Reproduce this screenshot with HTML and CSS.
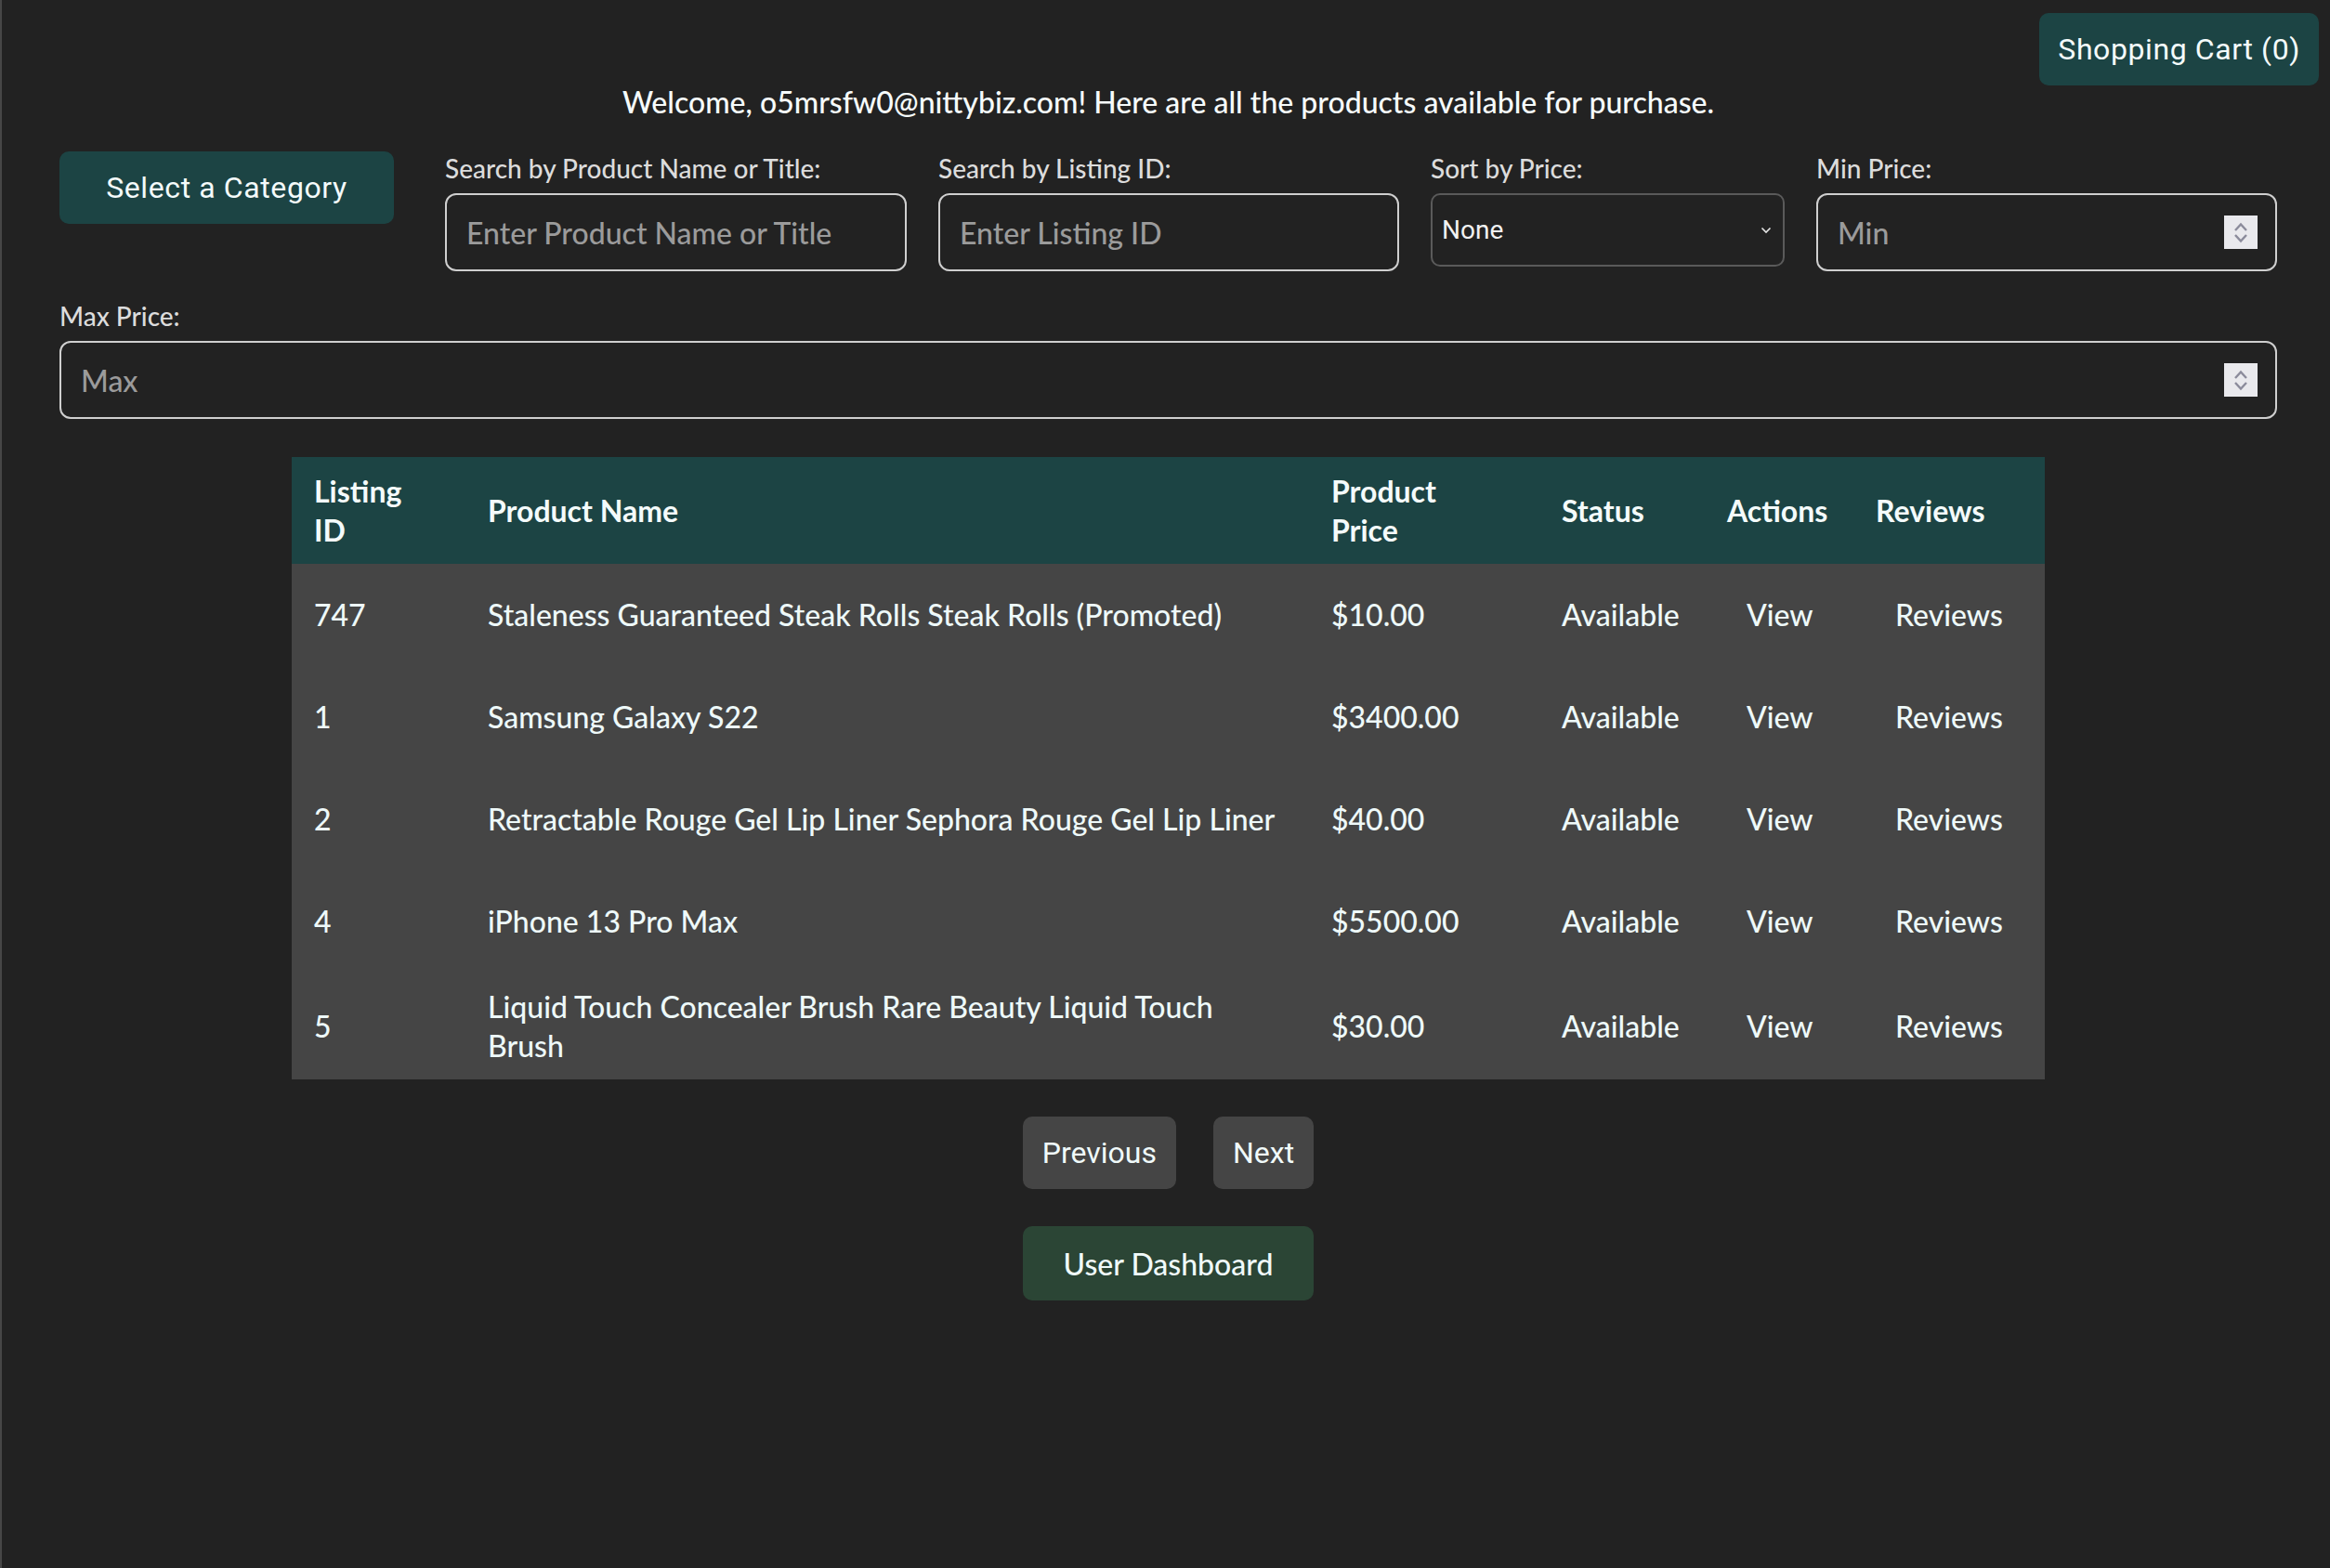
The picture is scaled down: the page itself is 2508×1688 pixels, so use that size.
FILE: index.html
```html
<!DOCTYPE html>
<html lang="en">
<head>
<meta charset="utf-8">
<title>Products</title>
<link rel="stylesheet" href="styles.css">
</head>
<body>
<button class="cart-btn" type="button">Shopping Cart (0)</button>
<main class="page">
  <p class="welcome">Welcome, o5mrsfw0@nittybiz.com! Here are all the products available for purchase.</p>

  <section class="filters">
    <div class="filter-row">
      <button class="category-btn" type="button">Select a Category</button>
      <label class="field field-name">
        <span class="field-label">Search by Product Name or Title:</span>
        <span class="box"><input type="text" placeholder="Enter Product Name or Title"></span>
      </label>
      <label class="field field-id">
        <span class="field-label">Search by Listing ID:</span>
        <span class="box"><input type="text" placeholder="Enter Listing ID"></span>
      </label>
      <label class="field field-sort">
        <span class="field-label">Sort by Price:</span>
        <span class="select-box">
          <select><option>None</option></select>
          <svg class="chev" width="12" height="8" viewBox="0 0 12 8"><path d="M1.5 1.5 L6 6 L10.5 1.5" fill="none" stroke="#e6e6e6" stroke-width="1.6"/></svg>
        </span>
      </label>
      <label class="field field-min">
        <span class="field-label">Min Price:</span>
        <span class="box">
          <input type="text" placeholder="Min">
          <span class="spinner">
            <svg width="16" height="28" viewBox="0 0 16 28"><path d="M2 12 L8 5.5 L14 12" fill="none" stroke="#8b8b9b" stroke-width="2.4"/><path d="M2 17 L8 23.5 L14 17" fill="none" stroke="#8b8b9b" stroke-width="2.4"/></svg>
          </span>
        </span>
      </label>
    </div>
    <label class="field field-max">
      <span class="field-label">Max Price:</span>
      <span class="box">
        <input type="text" placeholder="Max">
        <span class="spinner">
          <svg width="16" height="28" viewBox="0 0 16 28"><path d="M2 12 L8 5.5 L14 12" fill="none" stroke="#8b8b9b" stroke-width="2.4"/><path d="M2 17 L8 23.5 L14 17" fill="none" stroke="#8b8b9b" stroke-width="2.4"/></svg>
        </span>
      </span>
    </label>
  </section>

  <table class="products">
    <colgroup>
      <col class="c-id"><col class="c-name"><col class="c-price"><col class="c-status"><col class="c-actions"><col class="c-reviews">
    </colgroup>
    <thead>
      <tr>
        <th>Listing<br>ID</th>
        <th>Product Name</th>
        <th>Product<br>Price</th>
        <th>Status</th>
        <th>Actions</th>
        <th>Reviews</th>
      </tr>
    </thead>
    <tbody>
      <tr class="row">
        <td>747</td>
        <td>Staleness Guaranteed Steak Rolls Steak Rolls (Promoted)</td>
        <td>$10.00</td>
        <td>Available</td>
        <td><button class="link-btn" type="button">View</button></td>
        <td><button class="link-btn" type="button">Reviews</button></td>
      </tr>
      <tr class="row">
        <td>1</td>
        <td>Samsung Galaxy S22</td>
        <td>$3400.00</td>
        <td>Available</td>
        <td><button class="link-btn" type="button">View</button></td>
        <td><button class="link-btn" type="button">Reviews</button></td>
      </tr>
      <tr class="row">
        <td>2</td>
        <td>Retractable Rouge Gel Lip Liner Sephora Rouge Gel Lip Liner</td>
        <td>$40.00</td>
        <td>Available</td>
        <td><button class="link-btn" type="button">View</button></td>
        <td><button class="link-btn" type="button">Reviews</button></td>
      </tr>
      <tr class="row">
        <td>4</td>
        <td>iPhone 13 Pro Max</td>
        <td>$5500.00</td>
        <td>Available</td>
        <td><button class="link-btn" type="button">View</button></td>
        <td><button class="link-btn" type="button">Reviews</button></td>
      </tr>
      <tr class="row">
        <td>5</td>
        <td>Liquid Touch Concealer Brush Rare Beauty Liquid Touch Brush</td>
        <td>$30.00</td>
        <td>Available</td>
        <td><button class="link-btn" type="button">View</button></td>
        <td><button class="link-btn" type="button">Reviews</button></td>
      </tr>
    </tbody>
  </table>

  <div class="nav-actions">
    <div class="pager">
      <button class="pager-btn" type="button">Previous</button>
      <button class="pager-btn" type="button">Next</button>
    </div>
    <button class="dashboard-btn" type="button">User Dashboard</button>
  </div>
</main>
</body>
</html>
```

FILE: styles.css
```css
html {
  background: #222222;
}

body {
  margin: 0;
  min-height: 1688px;
  box-sizing: border-box;
  background: #222222;
  border-left: 2px solid #474747;
  color: #eef9f9;
  font-family: Lato, "Noto Sans", sans-serif;
  font-weight: 500;
}

.page {
  padding: 89px 57px 60px 62px;
}

.cart-btn {
  position: absolute;
  top: 14px;
  right: 12px;
  height: 78px;
  padding: 0 20px;
  border: none;
  border-radius: 10px;
  background: #1c4444;
  color: #f4fbfb;
  font-family: Roboto, "Liberation Sans", sans-serif;
  font-size: 32px;
  letter-spacing: 0.6px;
}

.welcome {
  margin: 0;
  text-align: center;
  font-size: 32px;
  line-height: 41px;
  color: #f6fbfb;
}

.filters {
  margin-top: 33px;
}

.filter-row {
  display: flex;
  align-items: flex-start;
  gap: 34px;
}

.category-btn {
  width: 360px;
  height: 78px;
  margin-right: 21px;
  flex-shrink: 0;
  border: none;
  border-radius: 10px;
  background: #1c4444;
  color: #f4fbfb;
  font-family: Roboto, "Liberation Sans", sans-serif;
  font-size: 32px;
  letter-spacing: 0.6px;
}

.field {
  display: flex;
  flex-direction: column;
}

.field-name { width: 497px; }
.field-id { width: 496px; }
.field-sort { width: 381px; }
.field-min { width: 496px; }

.field-label {
  font-size: 28px;
  line-height: 34px;
  color: #dcdcdc;
  margin-bottom: 10px;
  padding-top: 1px;
}

.box {
  display: flex;
  align-items: center;
  height: 84px;
  box-sizing: border-box;
  border: 2px solid #cfcfcf;
  border-radius: 12px;
  padding: 0 19px 0 21px;
}

.box input {
  flex: 1;
  min-width: 0;
  padding: 0;
  border: none;
  outline: none;
  background: transparent;
  color: #eeeeee;
  font-family: Lato, "Noto Sans", sans-serif;
  font-weight: 500;
  font-size: 32px;
}

.box input::placeholder {
  color: #9b9b9b;
}

.spinner {
  width: 36px;
  height: 36px;
  display: flex;
  align-items: center;
  justify-content: center;
  background: #e9e9ed;
}

.select-box {
  display: flex;
  align-items: center;
  height: 79px;
  box-sizing: border-box;
  border: 2px solid #5a5a5a;
  border-radius: 10px;
  padding: 0 12px 0 10px;
}

.select-box select {
  flex: 1;
  appearance: none;
  -webkit-appearance: none;
  border: none;
  outline: none;
  background: transparent;
  color: #f2f2f2;
  font-family: Roboto, "Liberation Sans", sans-serif;
  font-size: 28px;
  padding: 0;
}

.field-max {
  margin-top: 30px;
}

.products {
  width: 1887px;
  margin: 41px auto 0;
  border-collapse: collapse;
  table-layout: fixed;
}

.c-id { width: 187px; }
.c-name { width: 908px; }
.c-price { width: 248px; }
.c-status { width: 178px; }
.c-actions { width: 160px; }
.c-reviews { width: 206px; }

.products th {
  background: #1c4444;
  text-align: left;
  font-weight: 700;
  font-size: 32px;
  line-height: 1.3;
  padding: 16px 24px;
  color: #f4fbfb;
}

.products td {
  background: #454545;
  font-size: 32px;
  line-height: 1.3;
  padding: 16px 24px;
}

.products .row {
  height: 110px;
}

.link-btn {
  padding: 0 21px;
  border: none;
  background: transparent;
  color: inherit;
  font: inherit;
  white-space: nowrap;
}

.nav-actions {
  display: flex;
  flex-direction: column;
  gap: 40px;
  width: fit-content;
  margin: 40px auto 0;
}

.pager {
  display: flex;
  gap: 40px;
}

.pager-btn {
  height: 78px;
  padding: 0 21px;
  border: none;
  border-radius: 10px;
  background: #454545;
  color: #f0fafa;
  font-family: Roboto, "Liberation Sans", sans-serif;
  font-size: 32px;
}

.dashboard-btn {
  height: 80px;
  border: none;
  border-radius: 10px;
  background: #2b4535;
  color: #f0fafa;
  font-family: Lato, "Noto Sans", sans-serif;
  font-weight: 500;
  font-size: 32px;
}
```
